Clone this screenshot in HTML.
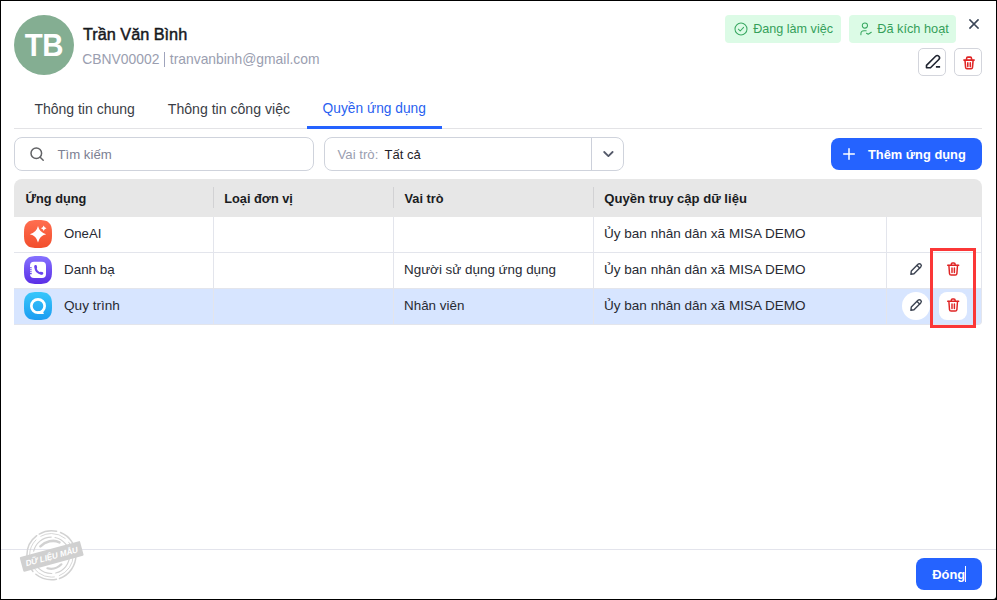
<!DOCTYPE html>
<html lang="vi">
<head>
<meta charset="utf-8">
<title>Quyền ứng dụng</title>
<style>
*{box-sizing:border-box;margin:0;padding:0}
html,body{width:997px;height:600px;overflow:hidden;background:#000}
body{font-family:"Liberation Sans",sans-serif;font-size:14px;color:#1f2229;position:relative}
.dlg{position:absolute;left:1px;top:1px;width:995px;height:598px;background:#fff;border-radius:0 0 3px 0;overflow:hidden}
.abs{position:absolute;white-space:nowrap}
svg{position:absolute;overflow:visible}
.avatar{left:13px;top:14px;width:60px;height:60px;border-radius:50%;background:#84ae92;color:#fff;font-weight:bold;font-size:30px;text-align:center;line-height:59px;letter-spacing:-0.5px}
.name{left:82px;top:22.600px;font-size:16.25px;font-weight:normal;-webkit-text-stroke:0.45px #16181d;color:#16181d;line-height:20px}
.sub{left:81.300px;top:49.200px;font-size:13.86px;color:#9a9eb0;line-height:18px}
.badge{top:14px;height:28px;border-radius:4px;background:#dcfbe6;color:#35a05a;font-size:12.75px;line-height:28px}
.ibtn{width:28px;height:28px;border:1px solid #d3d5dc;border-radius:5px;background:#fff}
.tab{top:98.600px;font-size:14px;line-height:18px;color:#3a3d46}
.tab.act{color:#2a5ff0}
.tabline{left:13px;top:127px;width:968px;height:1px;background:#e3e3e6}
.tabact{left:306px;top:125px;width:135px;height:3px;background:#2563ff}
.inp{top:136px;height:34px;border:1px solid #cfd3dc;border-radius:8px;background:#fff}
.btn{background:#2563ff;color:#fff;font-weight:bold;border-radius:8px}
.thead{left:13px;top:178px;width:968px;height:38px;background:#e7e7e7;border-radius:8px 8px 0 0}
.th{top:188.800px;font-weight:bold;font-size:12.75px;line-height:18px;color:#1a1c22}
.hsep{top:186px;width:1px;height:21px;background:#d2d2d4}
.row{left:13px;width:968px;height:36px}
.hl{left:13px;width:968px;height:1px;background:#e3e5ec}
.vl{top:216px;width:1px;height:107px;background:#e3e5ec}
.td{font-size:13.42px;line-height:18px;color:#272a33}
.foot{left:0;top:548px;width:995px;height:1px;background:#e3e4ec}
</style>
</head>
<body>
<div class="dlg">
  <!-- header -->
  <div class="abs avatar"><span style="display:inline-block;transform:translate(-0.700px,-0.100px) scale(0.98,1.065)">TB</span></div>
  <div class="abs name">Trần Văn Bình</div>
  <div class="abs sub">CBNV00002<span style="display:inline-block;width:1px;height:15.500px;background:#9fa4bc;margin:0 4.500px 0 5px;vertical-align:-3px"></span>tranvanbinh@gmail.com</div>

  <div class="abs badge" style="left:724px;width:116px">
    <svg style="left:9px;top:7px" width="14" height="14" viewBox="0 0 14 14" fill="none" stroke="#3aa862" stroke-width="1.05" stroke-linecap="round" stroke-linejoin="round"><circle cx="7" cy="7" r="6"/><path d="M4.4 7.2 6.2 9 9.6 5.4"/></svg>
    <span class="abs" style="left:28.200px;top:0;font-size:12.6px">Đang làm việc</span>
  </div>
  <div class="abs badge" style="left:848px;width:107px">
    <svg style="left:11px;top:7px" width="13" height="14" viewBox="0 0 13 14" fill="none" stroke="#3aa862" stroke-width="1.05" stroke-linecap="round" stroke-linejoin="round"><circle cx="4.900" cy="3.500" r="2.600"/><path d="M0.900 12.800V11.800C0.900 9.900 2.200 8.800 4 8.800H6.200"/><path d="M6.500 11.200 8.200 12.300 11.300 10.300"/></svg>
    <span class="abs" style="left:28.2px;top:0">Đã kích hoạt</span>
  </div>
  <svg style="left:968px;top:17.600px" width="10" height="10" viewBox="0 0 10 10" fill="none" stroke="#3c4758" stroke-width="1.650" stroke-linecap="square"><path d="M1 1 9 9M9 1 1 9"/></svg>

  <div class="abs ibtn" style="left:917px;top:47px">
    <svg style="left:0;top:0" width="26" height="26" viewBox="0 0 26 26" fill="none" stroke="#1f2430" stroke-width="1.600" stroke-linejoin="round"><path d="M7.500 18.800V16.400L16.600 7.300A2.200 2.200 0 0 1 19.800 10.500L11.500 18.800Z"/><path d="M16.900 17.800H21.100" stroke-width="1.700"/></svg>
  </div>
  <div class="abs ibtn" style="left:953px;top:47px">
    <svg style="left:0;top:0" width="26" height="26" viewBox="0 0 26 26" fill="none" stroke="#e02626" stroke-width="1.550" stroke-linecap="round" stroke-linejoin="round"><path d="M8.900 11.100H19.200"/><path d="M11.600 10.900V9.300c0-.7.500-1.200 1.200-1.200h2.500c.7 0 1.200.5 1.200 1.200V10.900"/><path d="M10 11.400l.6 7c.1.800.6 1.300 1.400 1.300h4.100c.8 0 1.300-.5 1.400-1.300l.6-7"/><path d="M12.800 13.700V17.600M15.300 13.700V17.600"/></svg>
  </div>

  <!-- tabs -->
  <div class="abs tab" style="left:33.400px">Thông tin chung</div>
  <div class="abs tab" style="left:166.800px;font-size:14.1px">Thông tin công việc</div>
  <div class="abs tab act" style="left:321.600px;font-size:13.75px">Quyền ứng dụng</div>
  <div class="abs tabline"></div>
  <div class="abs tabact"></div>

  <!-- filters -->
  <div class="abs inp" style="left:13px;width:300px">
    <svg style="left:15px;top:9px" width="15" height="15" viewBox="0 0 15 15" fill="none" stroke="#626366" stroke-width="1.5" stroke-linecap="round"><circle cx="6.3" cy="6.3" r="5.3"/><path d="M10.200 10.200 13.200 13.200"/></svg>
    <span class="abs" style="left:42.500px;top:8px;color:#7c8092;font-size:13.2px;line-height:18px">Tìm kiếm</span>
  </div>
  <div class="abs inp" style="left:323px;width:300px">
    <span class="abs" style="left:12.500px;top:8px;color:#9a9eb0;font-size:13.2px;line-height:18px">Vai trò:</span>
    <span class="abs" style="left:59.500px;top:8px;color:#1f2229;font-size:13px;line-height:18px">Tất cả</span>
    <span class="abs" style="left:266px;top:0;width:1px;height:32px;background:#ccd0da"></span>
    <svg style="left:278px;top:13.400px" width="11" height="7" viewBox="0 0 11 7" fill="none" stroke="#555a6a" stroke-width="1.800" stroke-linecap="round" stroke-linejoin="round"><path d="M1.200 1 5.400 5.100 9.600 1"/></svg>
  </div>
  <div class="abs btn" style="left:830px;top:136.500px;width:151px;height:32.500px">
    <svg style="left:12px;top:10.200px" width="12" height="12" viewBox="0 0 12 12" fill="none" stroke="#fff" stroke-width="1.5" stroke-linecap="round"><path d="M6 0.700V11.300M0.700 6H11.300"/></svg>
    <span class="abs" style="left:37px;top:8.300px;line-height:18px;font-size:12.85px">Thêm ứng dụng</span>
  </div>

  <!-- table -->
  <div class="abs thead"></div>
  <div class="abs th" style="left:24.500px">Ứng dụng</div>
  <div class="abs th" style="left:223.300px">Loại đơn vị</div>
  <div class="abs th" style="left:403.500px">Vai trò</div>
  <div class="abs th" style="left:603.300px;font-size:13.1px">Quyền truy cập dữ liệu</div>
  <div class="abs hsep" style="left:212px"></div>
  <div class="abs hsep" style="left:392px"></div>
  <div class="abs hsep" style="left:592px"></div>

  <div class="abs row" style="top:288px;height:35px;background:#d7e5ff;border-radius:0 0 4px 0"></div>
  <div class="abs hl" style="top:251px"></div>
  <div class="abs hl" style="top:287px"></div>
  <div class="abs vl" style="left:212px"></div>
  <div class="abs vl" style="left:392px"></div>
  <div class="abs vl" style="left:592px"></div>
  <div class="abs vl" style="left:885px"></div>
  <div class="abs" style="left:13px;top:216px;width:968px;height:108px;border-right:1px solid #e3e5ec;border-bottom:1px solid #e3e5ec;border-radius:0 0 4px 0"></div>
  <!-- app icons placeholder -->
  
  <svg style="left:23px;top:219px" width="28" height="28" viewBox="0 0 28 28">
    <defs><linearGradient id="g1" x1="0" y1="0" x2="0" y2="1"><stop offset="0" stop-color="#ff6e50"/><stop offset="1" stop-color="#f24e2c"/></linearGradient></defs>
    <path d="M28.00 14.00L27.96 16.98L27.82 18.71L27.60 20.14L27.28 21.38L26.88 22.48L26.38 23.46L25.79 24.34L25.11 25.11L24.34 25.79L23.46 26.38L22.48 26.88L21.38 27.28L20.14 27.60L18.71 27.82L16.98 27.96L14.00 28.00L11.02 27.96L9.29 27.82L7.86 27.60L6.62 27.28L5.52 26.88L4.54 26.38L3.66 25.79L2.89 25.11L2.21 24.34L1.62 23.46L1.12 22.48L0.72 21.38L0.40 20.14L0.18 18.71L0.04 16.98L0.00 14.00L0.04 11.02L0.18 9.29L0.40 7.86L0.72 6.62L1.12 5.52L1.62 4.54L2.21 3.66L2.89 2.89L3.66 2.21L4.54 1.62L5.52 1.12L6.62 0.72L7.86 0.40L9.29 0.18L11.02 0.04L14.00 0.00L16.98 0.04L18.71 0.18L20.14 0.40L21.38 0.72L22.48 1.12L23.46 1.62L24.34 2.21L25.11 2.89L25.79 3.66L26.38 4.54L26.88 5.52L27.28 6.62L27.60 7.86L27.82 9.29L27.96 11.02Z" fill="url(#g1)"/>
    <path d="M14 6.0Q15.56 12.64 22.2 14.2Q15.56 15.76 14 22.4Q12.44 15.76 5.800000000000001 14.2Q12.44 12.64 14 6.0Z" fill="#fff"/>
    <path d="M19.7 5.500000000000001Q20.26 7.74 22.5 8.3Q20.26 8.86 19.7 11.100000000000001Q19.14 8.86 16.9 8.3Q19.14 7.74 19.7 5.500000000000001Z" fill="#fff"/>
  </svg>
  <svg style="left:23px;top:255px" width="28" height="28" viewBox="0 0 28 28">
    <defs><linearGradient id="g2" x1="0" y1="0" x2="0" y2="1"><stop offset="0" stop-color="#8672ff"/><stop offset="1" stop-color="#5a2ee6"/></linearGradient></defs>
    <path d="M28.00 14.00L27.96 16.98L27.82 18.71L27.60 20.14L27.28 21.38L26.88 22.48L26.38 23.46L25.79 24.34L25.11 25.11L24.34 25.79L23.46 26.38L22.48 26.88L21.38 27.28L20.14 27.60L18.71 27.82L16.98 27.96L14.00 28.00L11.02 27.96L9.29 27.82L7.86 27.60L6.62 27.28L5.52 26.88L4.54 26.38L3.66 25.79L2.89 25.11L2.21 24.34L1.62 23.46L1.12 22.48L0.72 21.38L0.40 20.14L0.18 18.71L0.04 16.98L0.00 14.00L0.04 11.02L0.18 9.29L0.40 7.86L0.72 6.62L1.12 5.52L1.62 4.54L2.21 3.66L2.89 2.89L3.66 2.21L4.54 1.62L5.52 1.12L6.62 0.72L7.86 0.40L9.29 0.18L11.02 0.04L14.00 0.00L16.98 0.04L18.71 0.18L20.14 0.40L21.38 0.72L22.48 1.12L23.46 1.62L24.34 2.21L25.11 2.89L25.79 3.66L26.38 4.54L26.88 5.52L27.28 6.62L27.60 7.86L27.82 9.29L27.96 11.02Z" fill="url(#g2)"/>
    <rect x="6" y="5.700" width="16" height="16.400" rx="4" fill="#fff"/>
    <path d="M5.900 11.700h1.800M5.900 13.700h1.800M5.900 15.700h1.800M5.900 17.600h1.800" stroke="#6b48ee" stroke-width="1.050"/>
    <path d="M11.500 10.400C11.500 14.500 13.800 17.100 17.600 17.500" fill="none" stroke="#6a46ee" stroke-width="2.100" stroke-linecap="round"/>
    <path d="M10.400 10.300c0-.9.700-1.500 1.500-1.300.6.100.9.600 1 1.200l.2 1.300c.1.600-.3 1-.9 1.200l-1.300.3c-.3-.9-.5-1.800-.5-2.700z" fill="#6a46ee"/>
    <path d="M18 18.700c.9 0 1.500-.8 1.300-1.600-.1-.5-.6-.9-1.200-1l-1.400-.3c-.6-.1-1 .2-1.200.8l-.4 1.300c.9.500 1.900.8 2.900.8z" fill="#6a46ee"/>
  </svg>
  <svg style="left:23px;top:291px" width="28" height="28" viewBox="0 0 28 28">
    <defs><linearGradient id="g3" x1="0" y1="0" x2="0" y2="1"><stop offset="0" stop-color="#38c6fb"/><stop offset="1" stop-color="#1c9cf1"/></linearGradient></defs>
    <path d="M28.00 14.00L27.96 16.98L27.82 18.71L27.60 20.14L27.28 21.38L26.88 22.48L26.38 23.46L25.79 24.34L25.11 25.11L24.34 25.79L23.46 26.38L22.48 26.88L21.38 27.28L20.14 27.60L18.71 27.82L16.98 27.96L14.00 28.00L11.02 27.96L9.29 27.82L7.86 27.60L6.62 27.28L5.52 26.88L4.54 26.38L3.66 25.79L2.89 25.11L2.21 24.34L1.62 23.46L1.12 22.48L0.72 21.38L0.40 20.14L0.18 18.71L0.04 16.98L0.00 14.00L0.04 11.02L0.18 9.29L0.40 7.86L0.72 6.62L1.12 5.52L1.62 4.54L2.21 3.66L2.89 2.89L3.66 2.21L4.54 1.62L5.52 1.12L6.62 0.72L7.86 0.40L9.29 0.18L11.02 0.04L14.00 0.00L16.98 0.04L18.71 0.18L20.14 0.40L21.38 0.72L22.48 1.12L23.46 1.62L24.34 2.21L25.11 2.89L25.79 3.66L26.38 4.54L26.88 5.52L27.28 6.62L27.60 7.86L27.82 9.29L27.96 11.02Z" fill="url(#g3)"/>
    <circle cx="14" cy="14" r="6.650" fill="none" stroke="#fff" stroke-width="2.700"/>
    <path d="M13.500 19.300h4.300l.6-1.300 1.500 3.900H13.500z" fill="#fff"/>
  </svg>


  <div class="abs td" style="left:63px;top:223.500px;font-size:13.2px">OneAI</div>
  <div class="abs td" style="left:63px;top:259.500px">Danh bạ</div>
  <div class="abs td" style="left:63px;top:295.500px;font-size:13.6px">Quy trình</div>
  <div class="abs td" style="left:403px;top:259.500px">Người sử dụng ứng dụng</div>
  <div class="abs td" style="left:403px;top:295.500px">Nhân viên</div>
  <div class="abs td" style="left:603px;top:223.500px;font-size:13.54px">Ủy ban nhân dân xã MISA DEMO</div>
  <div class="abs td" style="left:603px;top:259.500px;font-size:13.54px">Ủy ban nhân dân xã MISA DEMO</div>
  <div class="abs td" style="left:603px;top:295.500px;font-size:13.54px">Ủy ban nhân dân xã MISA DEMO</div>

  <!-- row actions -->
  
  <div class="abs" style="left:901px;top:291px;width:28px;height:28px;border-radius:50%;background:#fff"></div>
  <div class="abs" style="left:938px;top:291px;width:28px;height:28px;border-radius:8px;background:#fff"></div>
  <svg style="left:908.8px;top:261.9px" width="12" height="12" viewBox="0 0 12 12" fill="none" stroke="#3c4351" stroke-width="1.400" stroke-linecap="round" stroke-linejoin="round"><path d="M0.900 11.300 1.300 8 8 1.300a1.900 1.900 0 0 1 2.700 2.700L4 10.800Z"/><path d="M7.100 2.400 9.600 4.900"/></svg>
  <svg style="left:945.8px;top:261.2px" width="12.400" height="14" viewBox="0 0 12.400 14" fill="none" stroke="#df2424" stroke-width="1.450" stroke-linecap="round" stroke-linejoin="round"><path d="M0.700 3.300h11"/><path d="M4.300 3.100V2.100c0-.7.500-1.200 1.200-1.200h1.400c.7 0 1.200.5 1.200 1.200v1"/><path d="M1.900 3.500l.6 8.100c.1.900.7 1.500 1.600 1.500h4.200c.9 0 1.500-.6 1.600-1.500l.6-8.100"/><path d="M5 6v4.500M7.400 6v4.500"/></svg>
  <svg style="left:908.8px;top:297.9px" width="12" height="12" viewBox="0 0 12 12" fill="none" stroke="#3c4351" stroke-width="1.400" stroke-linecap="round" stroke-linejoin="round"><path d="M0.900 11.300 1.300 8 8 1.300a1.900 1.900 0 0 1 2.700 2.700L4 10.800Z"/><path d="M7.100 2.400 9.600 4.900"/></svg>
  <svg style="left:945.8px;top:297.2px" width="12.400" height="14" viewBox="0 0 12.400 14" fill="none" stroke="#df2424" stroke-width="1.450" stroke-linecap="round" stroke-linejoin="round"><path d="M0.700 3.300h11"/><path d="M4.300 3.100V2.100c0-.7.500-1.200 1.200-1.200h1.400c.7 0 1.200.5 1.200 1.200v1"/><path d="M1.900 3.500l.6 8.100c.1.900.7 1.500 1.600 1.500h4.200c.9 0 1.500-.6 1.600-1.500l.6-8.100"/><path d="M5 6v4.500M7.400 6v4.500"/></svg>
  <div class="abs" style="left:929px;top:247px;width:46px;height:79.500px;border:3px solid #fb3737"></div>


  <!-- footer -->
  <div class="abs foot"></div>
  
  <svg style="left:0;top:0" width="120" height="598" viewBox="0 0 120 598">
    <g fill="none" stroke="#d2d2d2" stroke-linecap="round">
      <circle cx="50.4" cy="554.3" r="24.500" stroke-width="1.500" stroke-dasharray="30 3 22 4 40 3 18 4"/>
      <circle cx="50.4" cy="554.3" r="21.800" stroke-width="0.900" stroke-dasharray="26 5 30 4 20 6"/>
      <circle cx="50.4" cy="554.3" r="18.200" stroke-width="1.200" stroke-dasharray="24 4 28 5"/>
      <path d="M39.4 545.3c5-5 13-7 19-4" stroke-width="2.600"/>
      <path d="M46.4 567.3c6 1.500 11-1 14-4" stroke-width="2.200"/>
    </g>
    <g transform="translate(50.699999999999996 555.4) rotate(-15.200)">
      <rect x="-31.200" y="-7.600" width="62.400" height="15.200" rx="1" fill="#d0d0d0"/>
      <text x="0" y="3" text-anchor="middle" font-family="Liberation Sans, sans-serif" font-weight="bold" font-style="italic" font-size="8.300" fill="#fff" textLength="54" lengthAdjust="spacingAndGlyphs">DỮ LIỆU MẪU</text>
    </g>
  </svg>

  <div class="abs btn" style="left:915px;top:557px;width:66px;height:32px"><span class="abs" style="left:16.300px;top:7.600px;line-height:18px;font-size:12.9px">Đóng</span><span class="abs" style="left:49px;top:8px;width:1px;height:16px;background:#fff"></span></div>
</div>
</body>
</html>
